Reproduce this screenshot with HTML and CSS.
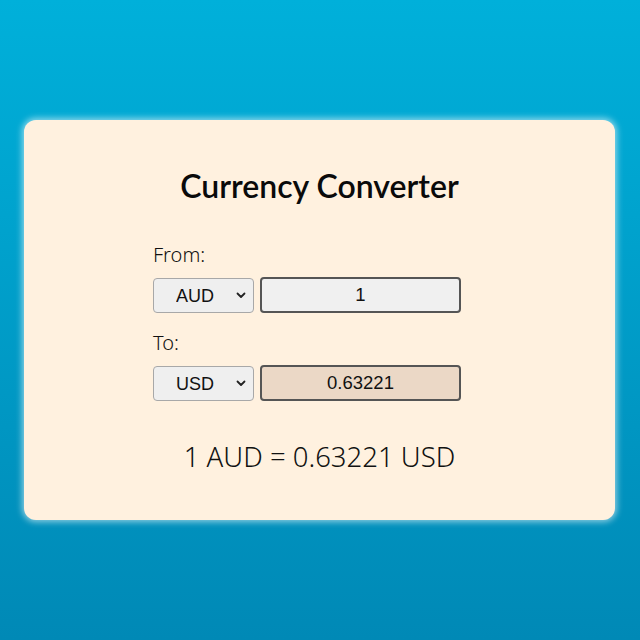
FILE: index.html
```html
<!DOCTYPE html>
<html lang="en">
<head>
<meta charset="utf-8">
<title>Currency Converter</title>
<link rel="stylesheet" href="styles.css">
</head>
<body>
<main class="card">
  <h1 class="title">Currency Converter</h1>
  <div class="form">
    <label class="label">From:</label>
    <div class="row">
      <div class="select-wrap">
        <select class="select"><option>AUD</option></select>
        <svg class="chevron" width="10" height="7" viewBox="0 0 10 7"><path d="M1.5 1.5 L5 5 L8.5 1.5" fill="none" stroke="#222" stroke-width="1.8" stroke-linecap="round" stroke-linejoin="round"/></svg>
      </div>
      <input class="amount" type="text" value="1">
    </div>
    <label class="label">To:</label>
    <div class="row">
      <div class="select-wrap">
        <select class="select"><option>USD</option></select>
        <svg class="chevron" width="10" height="7" viewBox="0 0 10 7"><path d="M1.5 1.5 L5 5 L8.5 1.5" fill="none" stroke="#222" stroke-width="1.8" stroke-linecap="round" stroke-linejoin="round"/></svg>
      </div>
      <input class="amount result-box" type="text" value="0.63221" readonly>
    </div>
  </div>
  <p class="result">1 AUD = 0.63221 USD</p>
</main>
</body>
</html>
```
FILE: styles.css
```css
html, body {
  margin: 0;
  height: 100%;
}
body {
  background: linear-gradient(to bottom, #00b0da 0%, #0089b6 100%);
  display: flex;
  align-items: center;
  justify-content: center;
  font-family: "Noto Sans", "Open Sans", sans-serif;
  color: #111;
}
.card {
  box-sizing: border-box;
  width: 591px;
  height: 400px;
  margin-left: -1px;
  background: #fff1df;
  border-radius: 12px;
  box-shadow: 0 0 6px 2px rgba(255, 255, 255, 0.55);
  display: flex;
  flex-direction: column;
  align-items: center;
  padding-top: 46px;
}
.title {
  margin: 0;
  font-family: "Lato", sans-serif;
  font-weight: 600;
  font-size: 32px;
  line-height: 40px;
  color: #0a0a0a;
}
.form {
  align-self: flex-start;
  margin-left: 129px;
  width: 308px;
  margin-top: 35px;
  display: flex;
  flex-direction: column;
}
.label {
  font-family: "Noto Sans", sans-serif;
  font-size: 20px;
  line-height: 28px;
  color: #111;
  font-weight: 300;
}
.row {
  display: flex;
  gap: 6px;
  margin-top: 9px;
  margin-bottom: 16px;
}
.select-wrap {
  position: relative;
  width: 101px;
  height: 35px;
}
.select {
  box-sizing: border-box;
  appearance: none;
  -webkit-appearance: none;
  width: 101px;
  height: 35px;
  font-family: "Liberation Sans", Arial, sans-serif;
  font-size: 18px;
  color: #111;
  background: #efefef;
  border: 1px solid #a8a8a8;
  border-radius: 4px;
  padding: 0 0 0 22px;
  margin: 0;
}
.chevron {
  position: absolute;
  right: 8px;
  top: 14px;
  pointer-events: none;
}
.amount {
  box-sizing: border-box;
  width: 201px;
  height: 36px;
  font-family: "Liberation Sans", Arial, sans-serif;
  font-size: 18.5px;
  color: #111;
  text-align: center;
  background: #f0f0f0;
  border: 2px solid #555;
  border-radius: 4px;
  padding: 0;
  margin-top: -1px;
}
.result-box {
  background: #ebd8c6;
}
.result {
  margin: 21px 0 0;
  font-family: "Noto Sans", sans-serif;
  font-weight: 300;
  font-size: 27.5px;
  line-height: 38px;
  color: #111;
}
```
